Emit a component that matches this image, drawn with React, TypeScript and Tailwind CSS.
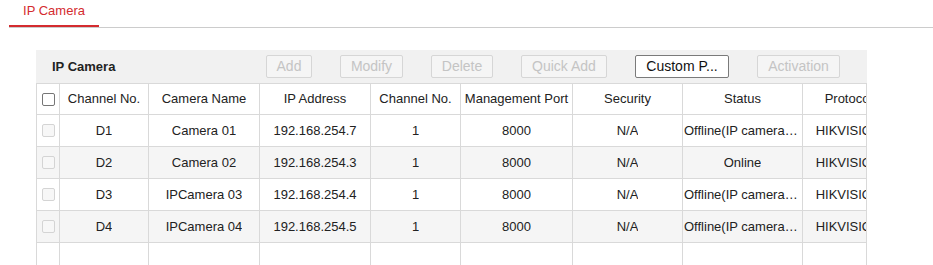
import React from 'react'

type Cam = {
  ch: string
  name: string
  ip: string
  no: string
  port: string
  security: string
  status: string
  protocol: string
}

const cams: Cam[] = [
  { ch: 'D1', name: 'Camera 01', ip: '192.168.254.7', no: '1', port: '8000', security: 'N/A', status: 'Offline(IP camera exception)', protocol: 'HIKVISION' },
  { ch: 'D2', name: 'Camera 02', ip: '192.168.254.3', no: '1', port: '8000', security: 'N/A', status: 'Online', protocol: 'HIKVISION' },
  { ch: 'D3', name: 'IPCamera 03', ip: '192.168.254.4', no: '1', port: '8000', security: 'N/A', status: 'Offline(IP camera exception)', protocol: 'HIKVISION' },
  { ch: 'D4', name: 'IPCamera 04', ip: '192.168.254.5', no: '1', port: '8000', security: 'N/A', status: 'Offline(IP camera exception)', protocol: 'HIKVISION' },
]

// column widths include the 1px right border
const cols = [
  { key: 'ch', label: 'Channel No.', w: 'w-[89px]' },
  { key: 'name', label: 'Camera Name', w: 'w-[111px]' },
  { key: 'ip', label: 'IP Address', w: 'w-[111px]' },
  { key: 'no', label: 'Channel No.', w: 'w-[90px]' },
  { key: 'port', label: 'Management Port', w: 'w-[112px]' },
  { key: 'security', label: 'Security', w: 'w-[110px]' },
  { key: 'status', label: 'Status', w: 'w-[120px]' },
  { key: 'protocol', label: 'Protocol', w: 'w-[92px]' },
] as const

const buttons = [
  { label: 'Add', w: 'w-[46px]', enabled: false },
  { label: 'Modify', w: 'w-[63px]', enabled: false },
  { label: 'Delete', w: 'w-[62px]', enabled: false },
  { label: 'Quick Add', w: 'w-[86px]', enabled: false },
  { label: 'Custom P...', w: 'w-[94px]', enabled: true },
  { label: 'Activation', w: 'w-[83px]', enabled: false },
]

function Checkbox({ disabled }: { disabled?: boolean }) {
  return disabled ? (
    <div className="w-[13px] h-[13px] rounded-[2px] border border-[#d4d4d4] bg-[#f7f7f7]" />
  ) : (
    <div className="w-[13px] h-[13px] rounded-[2px] border border-[#767676] bg-white" />
  )
}

export default function App() {
  return (
    <div className="w-[933px] h-[265px] overflow-hidden bg-white font-['Liberation_Sans',Arial,sans-serif] text-[13px] text-[#222]">
      <div className="mx-[9px] mr-0 flex border-b border-[#cccccc]">
        <div className="w-[90px] h-[27px] border-b-2 border-[#d42b2f] text-center leading-[21px] text-[#d42b2f]">
          IP Camera
        </div>
      </div>

      <div className="ml-[36px] mt-[22px] w-[831px]">
        <div className="flex items-center h-[33px] bg-[#f1f1f1] pl-[16px] pr-[27px]">
          <span className="font-bold text-[#222]">IP Camera</span>
          <div className="ml-auto flex gap-[28px]">
            {buttons.map((b) =>
              b.enabled ? (
                <button key={b.label} type="button" className={`${b.w} h-[23px] rounded-[2px] border border-[#7a7a7a] bg-white text-[14px] leading-[21px] text-[#111]`}>
                  {b.label}
                </button>
              ) : (
                <button key={b.label} type="button" className={`${b.w} h-[23px] rounded-[2px] border border-[#d6d6d6] bg-[#f5f5f5] text-[14px] leading-[21px] text-[#c4c4c4]`}>
                  {b.label}
                </button>
              )
            )}
          </div>
        </div>

        <div className="border-x border-[#d9d9d9] overflow-hidden">
          <div className="w-[900px]">
            <div className="flex h-[32px] border-y border-[#d9d9d9] bg-white">
              <div className="w-[23px] shrink-0 flex items-center justify-center border-r border-[#d9d9d9]">
                <Checkbox />
              </div>
              {cols.map((c, i) => (
                <div key={i} className={`${c.w} shrink-0 flex items-center justify-center whitespace-nowrap overflow-hidden border-r border-[#d9d9d9] text-[#222]`}>
                  {c.label}
                </div>
              ))}
            </div>

            {cams.map((cam, r) => (
              <div key={cam.ch} className={`flex h-[32px] border-b border-[#d9d9d9] ${r % 2 === 1 ? 'bg-[#f5f5f5]' : 'bg-white'}`}>
                <div className="w-[23px] shrink-0 flex items-center justify-center border-r border-[#d9d9d9]">
                  <Checkbox disabled />
                </div>
                {cols.map((c) => (
                  <div key={c.key} className={`${c.w} shrink-0 flex items-center justify-center overflow-hidden border-r border-[#d9d9d9] px-[1px]`}>
                    <span className="truncate">{cam[c.key]}</span>
                  </div>
                ))}
              </div>
            ))}

            <div className="flex h-[40px]">
              <div className="w-[23px] shrink-0 border-r border-[#d9d9d9]" />
              {cols.map((c) => (
                <div key={c.key} className={`${c.w} shrink-0 border-r border-[#d9d9d9]`} />
              ))}
            </div>
          </div>
        </div>
      </div>
    </div>
  )
}
